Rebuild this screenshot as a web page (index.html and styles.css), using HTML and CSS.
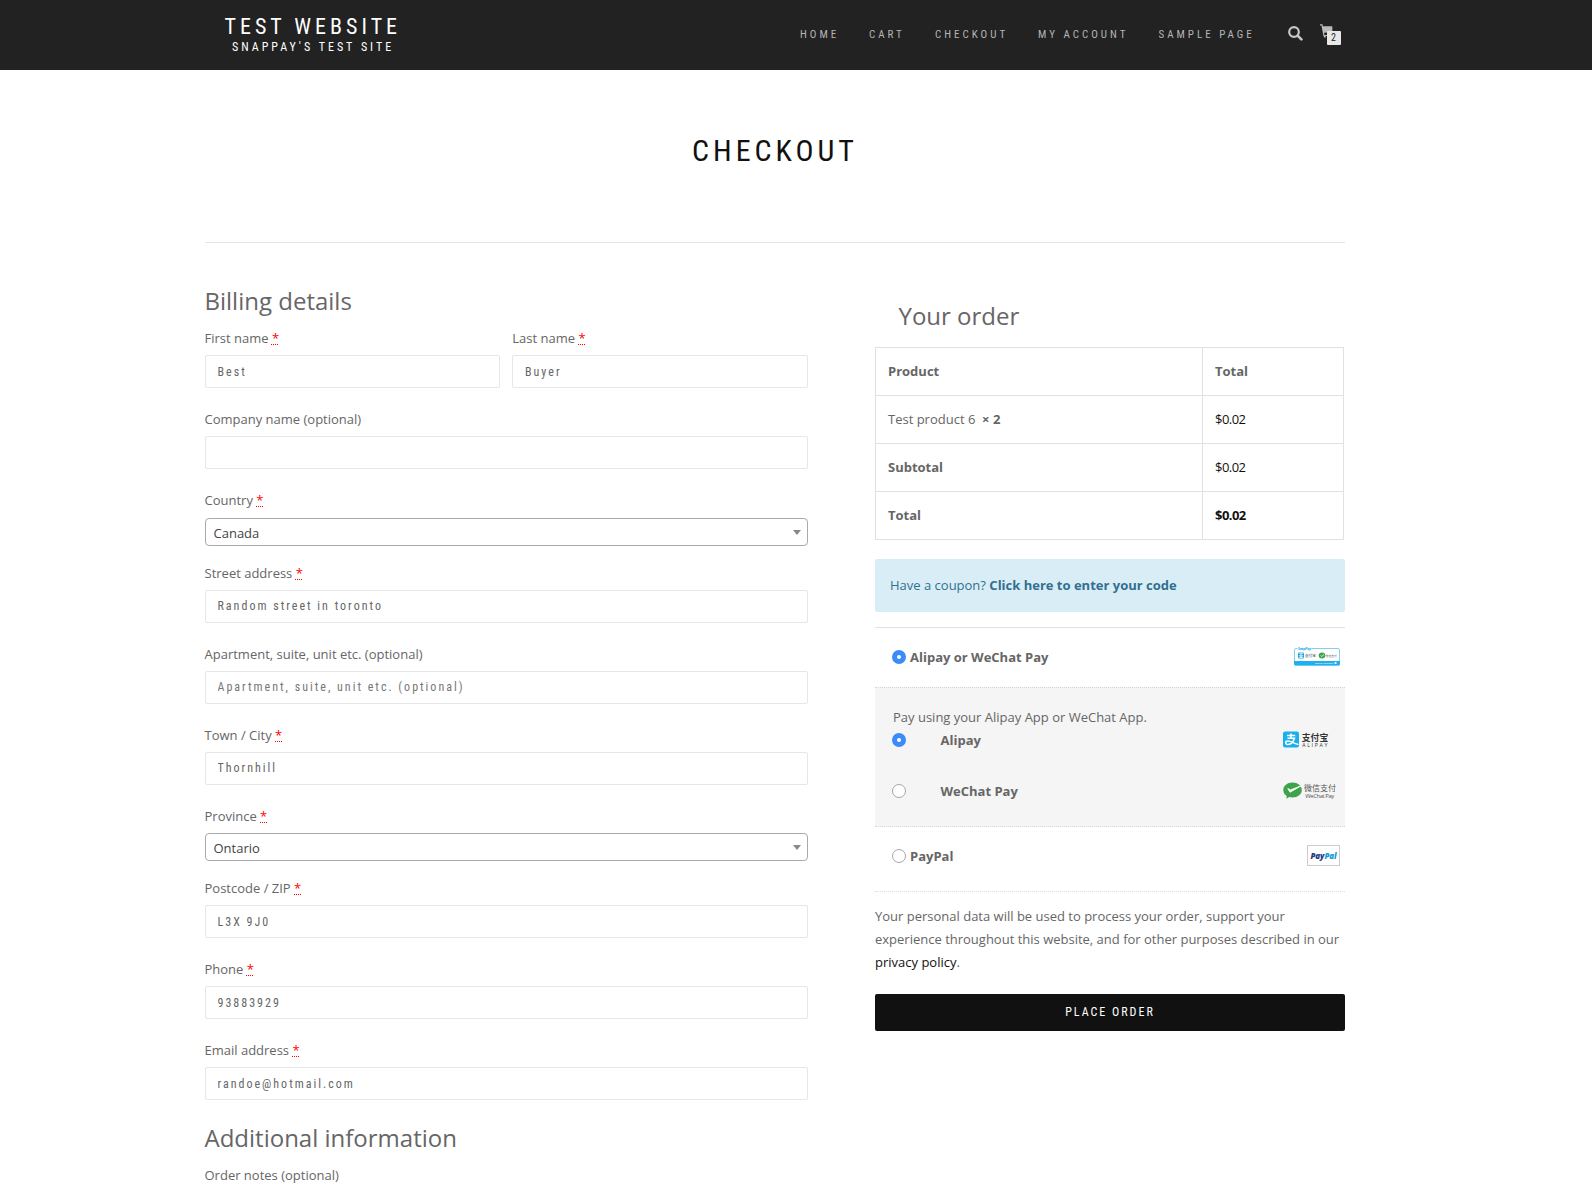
FILE: index.html
```html
<!DOCTYPE html>
<html lang="en">
<head>
<meta charset="utf-8">
<title>Checkout – Test Website</title>
<link rel="stylesheet" href="styles.css">
</head>
<body>
<header class="site-header">
  <div class="header-inner">
    <div class="brand">
      <div class="brand-title">TEST WEBSITE</div>
      <div class="brand-tagline">SNAPPAY'S TEST SITE</div>
    </div>
    <nav class="main-nav">
      <a>HOME</a>
      <a>CART</a>
      <a>CHECKOUT</a>
      <a>MY ACCOUNT</a>
      <a>SAMPLE PAGE</a>
    </nav>
    <svg class="search-icon" width="15" height="15" viewBox="0 0 15 15"><circle cx="6" cy="6" r="4.8" fill="none" stroke="#c8c8c4" stroke-width="2.2"/><path d="M9.6 9.6L13.4 13.4" stroke="#c8c8c4" stroke-width="2.6" stroke-linecap="round"/></svg>
    <div class="cart">
      <svg width="13" height="14" viewBox="0 0 13 14"><path d="M0 .9H2L3.9 11.5H11" fill="none" stroke="#bbb" stroke-width="1.2"/><path d="M2.2 2.3H12.3V7.5L3.4 9Z" fill="#bbb"/><circle cx="4.8" cy="12.6" r="1.1" fill="#bbb"/></svg>
      <span class="cart-count">2</span>
    </div>
  </div>
</header>

<main class="page">
  <h1 class="page-title">CHECKOUT</h1>
  <div class="columns">
    <section class="billing">
      <h3 class="heading">Billing details</h3>
      <div class="field-row">
        <div class="field"><label>First name <abbr>*</abbr></label><input class="text-input" value="Best"></div>
        <div class="field field-last"><label>Last name <abbr>*</abbr></label><input class="text-input" value="Buyer"></div>
      </div>
      <div class="field"><label>Company name (optional)</label><input class="text-input"></div>
      <div class="field field-select country"><label>Country <abbr>*</abbr></label><div class="select"><span>Canada</span><i class="arrow"></i></div></div>
      <div class="field"><label>Street address <abbr>*</abbr></label><input class="text-input text-raised" value="Random street in toronto"></div>
      <div class="field"><label>Apartment, suite, unit etc. (optional)</label><input class="text-input text-raised" placeholder="Apartment, suite, unit etc. (optional)"></div>
      <div class="field"><label>Town / City <abbr>*</abbr></label><input class="text-input text-raised" value="Thornhill"></div>
      <div class="field field-select"><label>Province <abbr>*</abbr></label><div class="select"><span>Ontario</span><i class="arrow"></i></div></div>
      <div class="field"><label>Postcode / ZIP <abbr>*</abbr></label><input class="text-input" value="L3X 9J0"></div>
      <div class="field"><label>Phone <abbr>*</abbr></label><input class="text-input" value="93883929"></div>
      <div class="field"><label>Email address <abbr>*</abbr></label><input class="text-input" value="randoe@hotmail.com"></div>
      <h3 class="heading heading-extra">Additional information</h3>
      <div class="field"><label>Order notes (optional)</label></div>
    </section>

    <section class="order">
      <h3 class="heading order-heading">Your order</h3>
      <table class="order-table">
        <tr><th class="col-product">Product</th><th>Total</th></tr>
        <tr><td>Test product 6 &nbsp;<b>× 2</b></td><td class="amount">$0.02</td></tr>
        <tr><th>Subtotal</th><td class="amount">$0.02</td></tr>
        <tr><th>Total</th><td class="amount"><b>$0.02</b></td></tr>
      </table>
      <div class="coupon">Have a coupon? <b>Click here to enter your code</b></div>

      <div class="payments">
        <div class="method">
          <input type="radio" class="radio" name="method" checked>
          <span class="method-name">Alipay or WeChat Pay</span>
          <svg class="logo logo-snappay" width="46" height="20" viewBox="0 0 46 20">
            <rect x=".5" y="2.5" width="45" height="16.5" rx="1.5" fill="#fff" stroke="#86cdf2"/>
            <path d="M0 15H46V18a1.5 1.5 0 0 1-1.5 1.5H1.5A1.5 1.5 0 0 1 0 18Z" fill="#1fb0ee"/>
            <rect x="3.5" y="0" width="14" height="4" fill="#fff"/>
            <text x="4" y="3.8" class="logo-brand" textLength="13">SnapPay</text>
            <rect x="4" y="6.5" width="6" height="6" rx="1" fill="#1aa7e8"/>
            <text x="4.600" y="11.300" class="logo-glyph-s">支</text>
            <text x="11" y="11.300" class="logo-cn-s">支付宝</text>
            <ellipse cx="28" cy="9.500" rx="3.300" ry="2.900" fill="#3da44b"/>
            <path d="M26.500 9.500L27.700 10.500L30 8.500" fill="none" stroke="#fff" stroke-width=".8"/>
            <text x="31.600" y="10.800" class="logo-cn-xs">微信支付</text>
            <text x="21" y="18.200" class="logo-secure" textLength="18">Secure Payments</text>
            <rect x="40.500" y="16" width="2" height="2" fill="#d8f1ff"/>
          </svg>
        </div>
        <div class="method-box">
          <p class="method-desc">Pay using your Alipay App or WeChat App.</p>
          <div class="sub-method">
            <input type="radio" class="radio" name="channel" checked>
            <span class="sub-name">Alipay</span>
            <svg class="logo logo-alipay" width="46" height="18" viewBox="0 0 46 18">
              <rect x="0" y=".5" width="16" height="16" rx="2" fill="#1ab0ec"/>
              <path d="M4 4.500H12.200M8 2.400V7.300M4.500 7.300H11.500C10.500 10.200 8 13.500 5 13.500C1.800 13.500 2 10.100 5 10.100C8.500 10.100 11 12.700 15.500 13.500" fill="none" stroke="#fff" stroke-width="1.500"/>
              <text x="18.800" y="9.700" class="logo-cn">支付宝</text>
              <text x="19.300" y="15.500" class="logo-latin" textLength="25">ALIPAY</text>
            </svg>
          </div>
          <div class="sub-method sub-wechat">
            <input type="radio" class="radio" name="channel">
            <span class="sub-name">WeChat Pay</span>
            <svg class="logo" width="54" height="18" viewBox="0 0 54 18">
              <path d="M9.500 .5C14.700 .5 18.800 3.800 18.800 8S14.700 15.500 9.500 15.500C8.300 15.500 7.200 15.300 6.200 15L3.500 16.800L3.700 14C1.500 12.600 .3 10.500 .3 8C.3 3.800 4.300 .5 9.500 .5Z" fill="#3da44b"/>
              <path d="M4.800 6.600L7 10.200L17.800 4L7.500 7.900Z" fill="#fff" stroke="#fff" stroke-width=".9"/>
              <text x="21" y="9.300" class="logo-cn-wx">微信支付</text>
              <text x="22.300" y="16" class="logo-wx" textLength="29">WeChat Pay</text>
            </svg>
          </div>
        </div>
        <div class="method method-paypal">
          <input type="radio" class="radio" name="method">
          <span class="method-name">PayPal</span>
          <span class="paypal-badge"><span class="pay">Pay</span><span class="pal">Pal</span></span>
        </div>
      </div>
      <p class="privacy">Your personal data will be used to process your order, support your experience throughout this website, and for other purposes described in our <a>privacy policy</a>.</p>
      <button class="place-order">PLACE ORDER</button>
    </section>
  </div>
</main>
</body>
</html>
```
FILE: styles.css
```css
* { box-sizing: border-box; }

html { overflow: hidden; }

body {
  margin: 0;
  height: 1184px;
  overflow: hidden;
  background: #fff;
  color: #666;
  font: 13px/23px "Open Sans", sans-serif;
}

.site-header,
.page-title,
.text-input,
.place-order {
  font-family: "Roboto Condensed", Roboto, sans-serif;
  font-stretch: 75%;
}

.site-header { height: 70px; background: #222; }

.header-inner {
  display: flex;
  width: 1140px;
  margin-left: 205px;
}

.brand {
  width: 192px;
  padding-top: 14px;
  color: #fff;
  white-space: nowrap;
}

.brand-title { padding-left: 19.5px; font-size: 22px; line-height: 25px; letter-spacing: 4px; }
.brand-tagline { padding-left: 27px; font-size: 12px; line-height: 16px; letter-spacing: 3px; }

.main-nav {
  display: grid;
  grid-template-columns: 69px 66px 103px 120.5px 129px;
  margin-left: 403px;
  padding-top: 23px;
  color: #b5b5b5;
  font-size: 11px;
  letter-spacing: 3px;
  white-space: nowrap;
}

.search-icon { flex: none; margin: 26px 0 0; }

.cart { position: relative; flex: none; width: 22px; height: 24px; margin: 24px 0 0 17px; }
.cart svg { display: block; }

.cart-count {
  position: absolute;
  left: 7px;
  top: 7px;
  width: 14px;
  height: 14px;
  border-radius: 1px;
  background: #e8e8e8;
  color: #222;
  font-size: 10px;
  line-height: 14px;
  text-align: center;
}

.page { width: 1140px; margin-left: 205px; }

.page-title {
  height: 173px;
  margin: 0;
  padding-top: 60px;
  border-bottom: 1px solid #e5e5e5;
  color: #111;
  font-size: 30px;
  font-weight: 400;
  line-height: 42px;
  letter-spacing: 4px;
  text-align: center;
}

.columns { display: flex; justify-content: space-between; }

.billing { width: 603px; padding-top: 42px; }

.heading { margin: 0; font-size: 24px; font-weight: 400; line-height: 32px; }
.billing > .heading { padding-bottom: 10px; }
.billing > .heading-extra { padding: 2px 0 10px; }
.billing > .heading,
.field label { text-indent: -.5px; }

.field { margin-bottom: 20px; }
.field-row { display: grid; grid-template-columns: 295px 296px; gap: 12px; }
.field label { display: block; margin-bottom: 5px; }
.field-last label { text-indent: .3px; }
.field-select { margin-bottom: 16px; }
.country label { margin-bottom: 6px; }

abbr {
  color: #f00;
  text-decoration: underline dotted 1px;
  text-underline-offset: 1px;
}

.text-input {
  display: block;
  width: 100%;
  height: 33px;
  padding: 0 11.5px;
  border: 1px solid #e6e6e6;
  border-radius: 2px;
  background: #fff;
  color: #666;
  font-size: 12px;
  letter-spacing: 2px;
  outline: 0;
}

.field-last .text-input { padding-left: 12px; }
.text-raised { padding-bottom: 2px; }
.text-input::placeholder { color: #777; opacity: 1; }

.select {
  display: flex;
  justify-content: space-between;
  align-items: center;
  height: 28px;
  padding: 2px 6px 0 7.5px;
  border: 1px solid #aaa;
  border-radius: 4px;
  color: #444;
}

.arrow { margin-top: -2px; border: 4px solid transparent; border-top: 5px solid #888; border-bottom: 0; }

.order { width: 470px; padding-top: 57px; }
.order-heading { padding-left: 23.5px; }

.order-table {
  width: 469px;
  margin-top: 15px;
  border-collapse: collapse;
  table-layout: fixed;
}

.order-table th,
.order-table td {
  height: 48px;
  padding: 0 12px;
  border: 1px solid #e1e1e1;
  text-align: left;
}

.col-product { width: 327px; }
.order-table .amount { color: #111; letter-spacing: -.55px; }

.coupon {
  height: 53px;
  margin-top: 19px;
  padding: 15px;
  border-radius: 2px;
  background: #d9edf6;
  color: #31708f;
}

.payments { margin-top: 15px; border-top: 1px solid #e1e1e1; border-bottom: 1px dotted #ddd; }

.method, .sub-method { display: flex; align-items: center; }
.method { height: 59px; padding: 0 5px 2px 17px; }
.method-name { margin-left: 4px; padding-top: 1px; font-weight: 700; }
.logo { flex: none; margin-left: auto; }

.radio {
  flex: none;
  width: 14px;
  height: 14px;
  margin: 0;
  appearance: none;
  border: 1px solid #a6a6a6;
  border-radius: 50%;
  background: #fff;
}

.radio:checked { border: 5px solid #3b8bfa; }

.method-box {
  height: 140px;
  padding: 18px 8px 0 17px;
  border-top: 1px dotted #d5d5d5;
  border-bottom: 1px dotted #d5d5d5;
  background: #f5f5f5;
}

.method-desc { margin: 0 0 0 1px; }
.sub-method { height: 21px; }
.sub-wechat { margin-top: 30px; }
.sub-name { margin-left: 34.5px; padding-top: 1px; font-weight: 700; }
.logo-alipay { margin-right: 8px; }
.logo-snappay { margin-top: -2px; }
.method-paypal { height: 64px; padding-bottom: 6px; }

.logo text { font-family: "Noto Sans CJK SC", sans-serif; fill: #333; }
.logo .logo-cn { font-size: 8.8px; font-weight: 700; }
.logo .logo-latin { font-family: "Open Sans", sans-serif; font-size: 5.2px; }
.logo .logo-cn-wx { font-size: 8px; fill: #555; }
.logo .logo-wx { font-family: "Open Sans", sans-serif; font-size: 5.9px; fill: #555; }
.logo .logo-cn-s { font-size: 3.6px; }
.logo .logo-cn-xs { font-size: 2.8px; fill: #666; }
.logo .logo-glyph-s { font-size: 4.8px; font-weight: 700; fill: #fff; }
.logo .logo-brand { font-family: "Open Sans", sans-serif; font-size: 3.5px; font-style: italic; font-weight: 700; fill: #1aa7e8; }
.logo .logo-secure { font-family: "Open Sans", sans-serif; font-size: 2.5px; fill: #fff; }

.paypal-badge {
  width: 33px;
  height: 21px;
  margin: -1px 0 0 auto;
  border: 1px solid #ccc;
  background: #fff;
  font-size: 8px;
  font-style: italic;
  font-weight: 800;
  line-height: 20px;
  text-align: center;
  letter-spacing: -.1px;
}

.pay { color: #253b80; }
.pal { color: #179bd7; }

.privacy { margin: 13px 0 0; }
.privacy a { color: #111; }

.place-order {
  display: block;
  width: 100%;
  height: 37px;
  margin-top: 20px;
  padding: 0 0 2px;
  border: 0;
  border-radius: 2px;
  background: #111;
  color: #fff;
  font-size: 12px;
  letter-spacing: 2px;
}
```
